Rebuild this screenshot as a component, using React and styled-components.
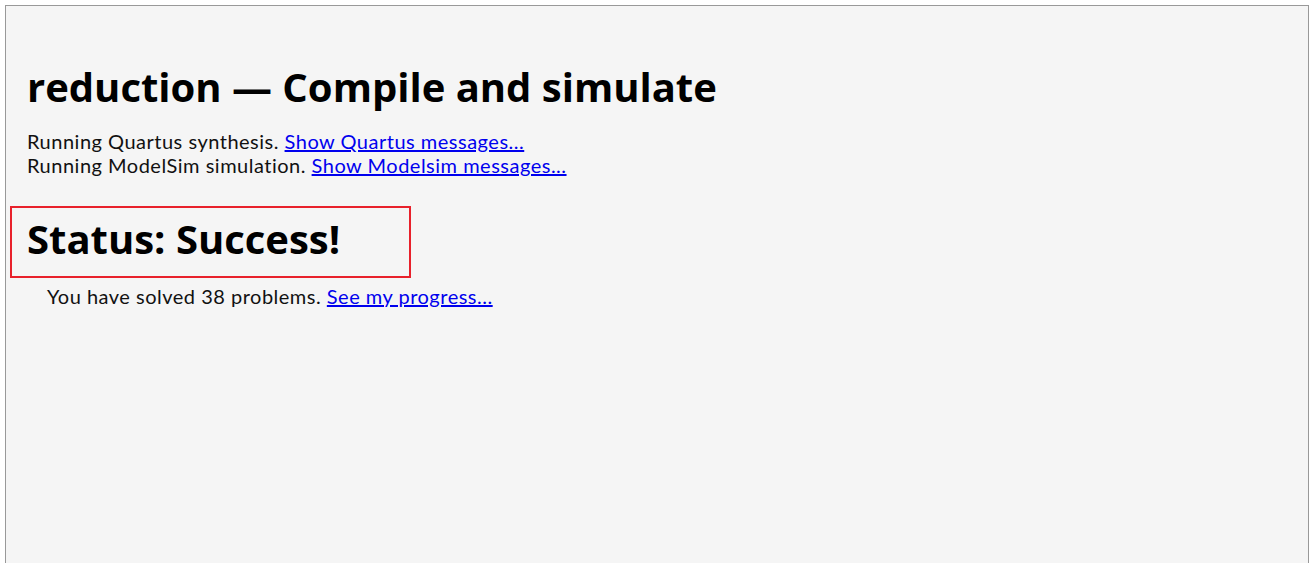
import React from 'react';
import styled, { createGlobalStyle } from 'styled-components';

const GlobalStyle = createGlobalStyle`
  html, body {
    margin: 0;
    padding: 0;
    background: #ffffff;
    overflow: hidden;
  }
  body {
    padding: 5px 0 0 5px;
    font-family: Lato, "Liberation Sans", sans-serif;
  }
`;

const Frame = styled.div`
  box-sizing: border-box;
  width: 1304px;
  height: 558px;
  border: 1px solid #999999;
  border-bottom: none;
  background: #f5f5f5;
  padding: 55px 20px 0 4px;
`;

const Title = styled.h1`
  margin: 0 0 0 17px;
  font-family: "Open Sans", sans-serif;
  font-weight: 700;
  font-size: 40px;
  line-height: 52px;
  color: #000;
`;

const Log = styled.div`
  margin: 16px 0 0 17px;
  font-size: 20px;
  line-height: 24px;
  letter-spacing: 0.5px;
  color: #111;
`;

const Line = styled.div``;

const Link = styled.a`
  color: #0000ee;
  text-decoration: underline;
`;

const StatusBox = styled.div`
  box-sizing: border-box;
  width: 401px;
  height: 72px;
  margin-top: 29px;
  border: 2px solid #e8212b;
  padding: 5px 0 0 15px;
  display: flex;
  align-items: flex-start;
`;

const StatusTitle = styled.h2`
  margin: 0;
  font-family: "Open Sans", sans-serif;
  font-weight: 700;
  font-size: 40px;
  line-height: 52px;
  color: #000;
`;

const Progress = styled.p`
  margin: 6px 0 0 37px;
  font-size: 20px;
  line-height: 24px;
  letter-spacing: 0.5px;
  color: #111;
`;

export default function App() {
  return (
    <>
      <GlobalStyle />
      <Frame>
        <Title>reduction — Compile and simulate</Title>
        <Log>
          <Line>
            Running Quartus synthesis. <Link href="#">Show Quartus messages...</Link>
          </Line>
          <Line>
            Running ModelSim simulation. <Link href="#">Show Modelsim messages...</Link>
          </Line>
        </Log>
        <StatusBox>
          <StatusTitle>Status: Success!</StatusTitle>
        </StatusBox>
        <Progress>
          You have solved 38 problems. <Link href="#">See my progress...</Link>
        </Progress>
      </Frame>
    </>
  );
}
